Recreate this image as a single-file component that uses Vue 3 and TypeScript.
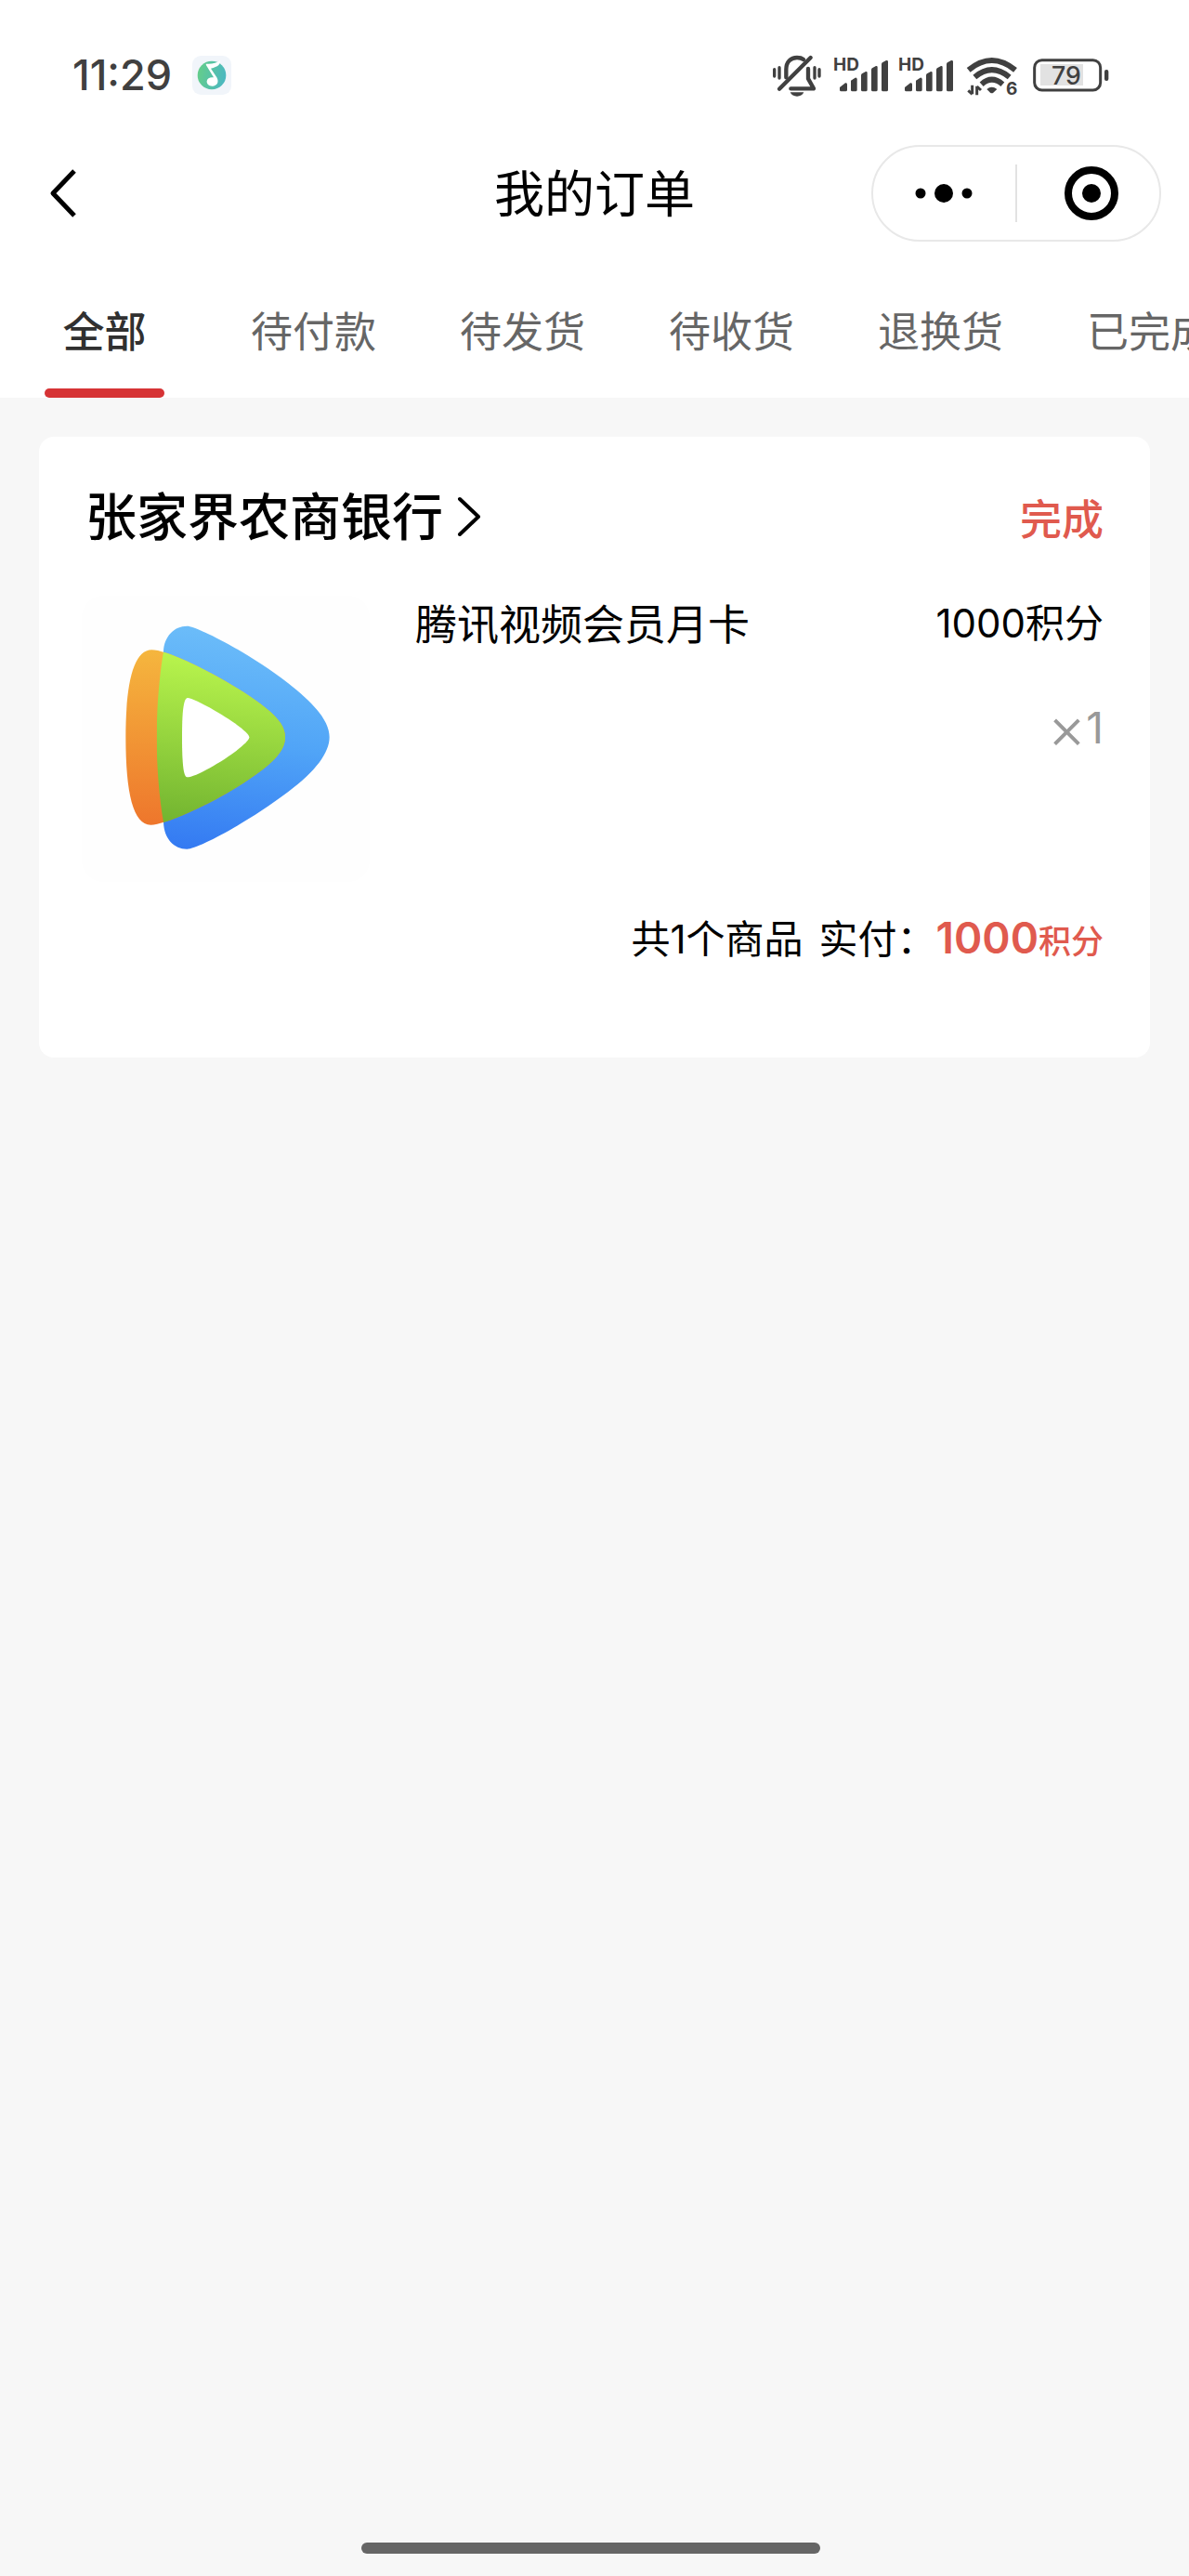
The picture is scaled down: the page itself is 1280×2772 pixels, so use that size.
<script setup lang="ts">
import { ref } from 'vue'

interface Order {
  store: string
  status: string
  product: string
  points: number
  quantity: number
}

const tabs: string[] = ['全部', '待付款', '待发货', '待收货', '退换货', '已完成']
const activeTab = ref<number>(0)

const orders: Order[] = [
  { store: '张家界农商银行', status: '完成', product: '腾讯视频会员月卡', points: 1000, quantity: 1 },
]
</script>

<template>
  <div class="page">
    <header class="top">
      <div class="status-bar">
        <div class="status-left">
          <span class="time">11:29</span>
          <svg class="music" viewBox="609 60 126 126" aria-hidden="true">
            <defs>
              <linearGradient id="music-fill" x1="0" y1="0" x2="1" y2="0.2">
                <stop offset="0" stop-color="#66cf86" />
                <stop offset="1" stop-color="#4cb9be" />
              </linearGradient>
            </defs>
            <rect x="609" y="60" width="126" height="126" rx="28" fill="#f1f5fa" />
            <circle cx="672" cy="123" r="46" fill="url(#music-fill)" />
            <path
              d="M653 86C670 88 688 84 699 75C700 88 693 95 669 101L688 130C697 146 688 158 674 158C662 158 655 151 656 142C657 132 668 128 678 130L654 91Z"
              fill="#fff"
            />
          </svg>
        </div>
        <div class="status-right">
          <svg class="bell" viewBox="36 54 162 138" aria-hidden="true">
            <g fill="none" stroke="#404040" stroke-width="13" stroke-linecap="round" stroke-linejoin="round">
              <path d="M41 104V126M57 98V132M171 98V132M186 104V126" stroke-width="10" />
              <path d="M79 130V104C79 80 94 66 114 66C122 66 130 68 135 72" />
              <path d="M150 102V134L168 166H94" />
              <path d="M57 167L158 66" />
            </g>
            <path d="M92 178H136C132 187 124 191 114 191C104 191 96 187 92 178Z" fill="#404040" />
          </svg>
          <svg v-for="n in 2" :key="n" class="signal" viewBox="234 54 174 138" aria-hidden="true">
            <text x="231" y="108" class="glyph-hd">HD</text>
            <g fill="#404040">
              <path d="M252 162L270 148Q276 146 276 152V170Q276 175 271 175H257Q252 175 252 170Z" />
              <path d="M288 140L302 131Q308 130 308 136V170Q308 175 303 175H293Q288 175 288 170Z" />
              <path d="M321 123Q321 119 325 117L336 111Q341 110 341 115V170Q341 175 336 175H326Q321 175 321 170Z" />
              <path d="M354 105Q354 101 358 99L369 93Q374 92 374 97V170Q374 175 369 175H359Q354 175 354 170Z" />
              <path d="M387 87Q387 83 391 81L402 75Q408 74 408 79V170Q408 175 403 175H392Q387 175 387 170Z" />
            </g>
          </svg>
          <svg class="wifi" viewBox="54 54 186 138" aria-hidden="true">
            <g fill="none" stroke="#404040" stroke-width="18">
              <path d="M68 106Q143 44 219 106" />
              <path d="M88 129Q143 82 200 129" />
              <path d="M110 152Q143 122 178 152" />
            </g>
            <path d="M127 168Q143 154 160 168L148 179Q143 183 138 179Z" fill="#404040" />
            <path d="M80 155V184M80 184L67 172M95 187V158M95 159L108 171" fill="none" stroke="#404040" stroke-width="9" />
            <text x="189" y="186" class="glyph-six">6</text>
          </svg>
          <svg class="battery" viewBox="276 54 246 138" aria-hidden="true">
            <rect x="300" y="87" width="138" height="69" fill="#e2e2e2" />
            <rect x="281" y="74" width="213" height="97" rx="24" fill="none" stroke="#404040" stroke-width="9" />
            <rect x="507" y="105" width="13" height="36" rx="6" fill="#404040" />
            <text x="384" y="152" text-anchor="middle" class="glyph-level">79</text>
          </svg>
        </div>
      </div>

      <div class="nav-bar">
        <button class="back" type="button" aria-label="返回">
          <svg viewBox="0 0 30 54" aria-hidden="true">
            <path d="M26 3L3 27L26 51" fill="none" stroke="#000" stroke-width="5" stroke-linejoin="round" />
          </svg>
        </button>
        <h1 class="title">我的订单</h1>
        <div class="capsule">
          <button type="button" aria-label="更多">
            <svg viewBox="0 0 64 64" aria-hidden="true">
              <circle cx="6" cy="32" r="5.5" />
              <circle cx="31" cy="32" r="10" />
              <circle cx="56" cy="32" r="5.5" />
            </svg>
          </button>
          <span class="divider"></span>
          <button type="button" aria-label="关闭">
            <svg viewBox="0 0 64 64" aria-hidden="true">
              <circle cx="35" cy="32" r="25" fill="none" stroke="#000" stroke-width="8" />
              <circle cx="35" cy="32" r="10" />
            </svg>
          </button>
        </div>
      </div>

      <nav class="tabs">
        <button
          v-for="(tab, i) in tabs"
          :key="tab"
          type="button"
          class="tab"
          :class="{ active: i === activeTab }"
          @click="activeTab = i"
        >
          {{ tab }}
        </button>
      </nav>
    </header>

    <main class="list">
      <article v-for="order in orders" :key="order.store" class="card">
        <div class="card-head">
          <a class="store" href="#">
            {{ order.store }}
            <svg viewBox="0 0 28 44" aria-hidden="true">
              <path d="M4 3L24 22L4 41" fill="none" stroke="#000" stroke-width="4" stroke-linecap="round" stroke-linejoin="round" />
            </svg>
          </a>
          <span class="state">{{ order.status }}</span>
        </div>

        <div class="item">
          <svg class="cover" viewBox="24 63 930 924" aria-hidden="true">
            <defs>
              <linearGradient id="blue" x1="0.3" y1="0" x2="0.2" y2="1">
                <stop offset="0" stop-color="#6cbdf9" />
                <stop offset="0.5" stop-color="#50a4f7" />
                <stop offset="1" stop-color="#347af2" />
              </linearGradient>
              <linearGradient id="orange" x1="0" y1="0" x2="0" y2="1">
                <stop offset="0" stop-color="#f5b63e" />
                <stop offset="1" stop-color="#ee762c" />
              </linearGradient>
              <linearGradient id="green" x1="0.2" y1="0" x2="0.1" y2="1">
                <stop offset="0" stop-color="#b9f54d" />
                <stop offset="1" stop-color="#70b22f" />
              </linearGradient>
              <clipPath id="overlap">
                <path d="M364 161C395 161 560 245 690 345C780 415 824 470 824 520C824 570 780 630 690 697C560 795 400 881 364 881C322 881 290 848 288 795C275 720 266 620 266 520C266 420 275 320 288 243C290 195 322 161 364 161Z" />
              </clipPath>
            </defs>
            <rect x="24" y="63" width="930" height="924" rx="70" fill="#fefefe" />
            <path
              d="M364 161C395 161 560 245 690 345C780 415 824 470 824 520C824 570 780 630 690 697C560 795 400 881 364 881C322 881 290 848 288 795C275 720 266 620 266 520C266 420 275 320 288 243C290 195 322 161 364 161Z"
              fill="url(#blue)"
            />
            <path
              d="M250 238C300 238 450 310 570 390C650 445 681 480 681 520C681 560 650 598 570 652C470 722 300 803 247 803C190 803 166 700 166 520C166 350 190 238 250 238Z"
              fill="url(#orange)"
            />
            <path
              d="M250 238C300 238 450 310 570 390C650 445 681 480 681 520C681 560 650 598 570 652C470 722 300 803 247 803C190 803 166 700 166 520C166 350 190 238 250 238Z"
              fill="url(#green)"
              clip-path="url(#overlap)"
            />
            <path
              d="M366 393C392 393 565 494 565 520C565 546 402 649 364 649C350 649 348 580 348 520C348 460 350 393 366 393Z"
              fill="#fff"
            />
          </svg>
          <h2 class="name">{{ order.product }}</h2>
          <div class="figures">
            <span class="price">{{ order.points }}积分</span>
            <span class="count"><span class="times">×</span>{{ order.quantity }}</span>
          </div>
        </div>

        <p class="total">
          <span>共{{ order.quantity }}个商品</span>
          <span class="paid">实付：</span>
          <strong>{{ order.points }}<small>积分</small></strong>
        </p>
      </article>
    </main>

    <footer class="home">
      <span class="home-bar"></span>
    </footer>
  </div>
</template>

<style>
body {
  margin: 0;
  background: #f7f7f7;
}
</style>

<style scoped>
.page {
  display: flex;
  flex-direction: column;
  min-height: 100vh;
  overflow: hidden;
  background: #f7f7f7;
  color: #000;
  font-family: Inter, "Noto Sans CJK SC", sans-serif;
}

button {
  padding: 0;
  border: 0;
  background: none;
  font: inherit;
  color: inherit;
}

svg {
  display: block;
  flex: none;
  overflow: visible;
}

.top {
  background: #fff;
}

.status-bar {
  display: flex;
  justify-content: space-between;
  align-items: center;
  padding: 58px 86px 0 78px;
}

.status-left {
  display: flex;
  align-items: center;
  gap: 22px;
}

.time {
  font-size: 45px;
  line-height: 46px;
  font-weight: 500;
  color: #404040;
}

.music {
  width: 42px;
  height: 42px;
}

.status-right {
  display: flex;
  gap: 12px;
}

.status-right svg {
  height: 46px;
}

.bell {
  width: 54px;
}

.signal {
  width: 58px;
}

.wifi {
  width: 62px;
}

.battery {
  width: 82px;
}

.glyph-hd,
.glyph-six {
  font-size: 57px;
  font-weight: 700;
  fill: #404040;
}

.glyph-level {
  font-size: 80px;
  font-weight: 500;
  fill: #404040;
}

.nav-bar {
  display: grid;
  grid-template-columns: 1fr auto 1fr;
  align-items: center;
  height: 208px;
  padding: 0 30px;
}

.back {
  justify-self: start;
  padding: 0 24px;
}

.back svg {
  width: 30px;
  height: 54px;
}

.title {
  margin: 0;
  padding-top: 4px;
  font-size: 54px;
  line-height: 80px;
  font-weight: 400;
}

.capsule {
  justify-self: end;
  display: flex;
  align-items: center;
  box-sizing: border-box;
  width: 312px;
  height: 104px;
  border: 2px solid #e8e8e8;
  border-radius: 52px;
}

.capsule button {
  flex: 1;
  display: flex;
  justify-content: center;
}

.capsule svg {
  width: 64px;
  height: 64px;
}

.divider {
  width: 2px;
  height: 62px;
  background: #e2e2e2;
}

.tabs {
  display: flex;
  overflow: hidden;
}

.tab {
  position: relative;
  flex: 0 0 225px;
  padding-bottom: 24px;
  font-size: 45px;
  line-height: 92px;
  white-space: nowrap;
  color: #666;
}

.tab.active {
  color: #303030;
  font-weight: 500;
}

.tab.active::after {
  content: "";
  position: absolute;
  left: 48px;
  right: 48px;
  bottom: 0;
  height: 10px;
  border-radius: 5px;
  background: #d63335;
}

.list {
  padding: 42px;
}

.card {
  padding: 46px 50px 95px 46px;
  border-radius: 16px;
  background: #fff;
}

.card-head {
  display: flex;
  justify-content: space-between;
  align-items: baseline;
  padding-left: 4px;
  line-height: 80px;
}

.store {
  display: flex;
  align-items: center;
  gap: 14px;
  font-size: 55px;
  font-weight: 500;
  color: #000;
  text-decoration: none;
}

.store svg {
  width: 28px;
  height: 44px;
}

.state {
  font-size: 45px;
  line-height: 60px;
  font-weight: 500;
  color: #e05a4e;
}

.item {
  display: flex;
  margin-top: 45px;
}

.cover {
  width: 310px;
  height: 308px;
}

.name {
  flex: 1;
  margin: 0 0 0 49px;
  font-size: 45px;
  line-height: 64px;
  font-weight: 400;
}

.figures {
  display: flex;
  flex-direction: column;
  align-items: flex-end;
  gap: 52px;
  line-height: 60px;
}

.price {
  font-size: 42px;
}

.count {
  display: flex;
  align-items: center;
  font-size: 46px;
  color: #999;
}

.times {
  font-size: 64px;
  font-weight: 300;
}

.total {
  display: flex;
  justify-content: flex-end;
  align-items: baseline;
  margin: 30px 0 0;
  font-size: 42px;
  line-height: 60px;
}

.paid {
  margin-left: 17px;
}

.total strong {
  font-size: 46px;
  font-weight: 600;
  color: #e05a4e;
}

.total small {
  font-size: 35px;
  font-weight: 500;
}

.home {
  display: flex;
  justify-content: center;
  margin-top: auto;
  padding: 0 8px 24px 0;
}

.home-bar {
  width: 494px;
  height: 12px;
  border-radius: 6px;
  background: #666;
}
</style>
